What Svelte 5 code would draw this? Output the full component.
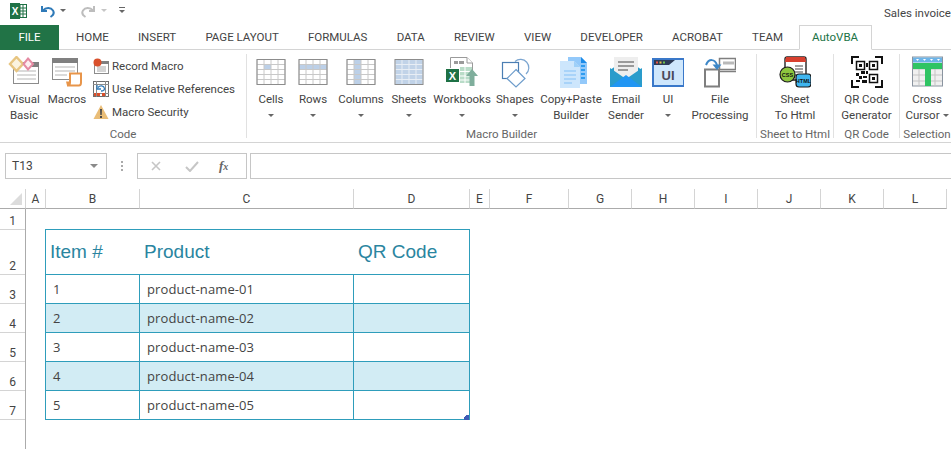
<script>
  const tabs = ['HOME','INSERT','PAGE LAYOUT','FORMULAS','DATA','REVIEW','VIEW','DEVELOPER','ACROBAT','TEAM'];
  const cols = ['A','B','C','D','E','F','G','H','I','J','K','L'];
  const rowsN = ['1','2','3','4','5','6','7'];
  const items = [1,2,3,4,5];
  const xs = [0.5,7.5,14.5,21.5,28.5];
  const ys = [0.5,5.5,10.5,15.5,20.5,25.5];
</script>

{#snippet grid(kind)}
  <svg class="ic" width="32" height="32" viewBox="0 0 32 32">
    <g transform="translate(1.5,3)">
      {#if kind === 'cell'}<rect x="7.5" y="5.5" width="7" height="5" fill="#bcd0e8"/>{/if}
      {#if kind === 'row'}<rect x="0.5" y="5.5" width="28" height="5" fill="#bcd0e8"/>{/if}
      {#if kind === 'col'}<rect x="7.5" y="0.5" width="7" height="25" fill="#bcd0e8"/>{/if}
      {#if kind === 'all'}<rect x="0.5" y="0.5" width="28" height="25" fill="#c1d3e8"/>{/if}
      {#each xs as x}<line x1={x} x2={x} y1="0.5" y2="25.5" stroke={kind === 'all' ? '#e8eef5' : '#c8c8c8'}/>{/each}
      {#each ys as y}<line x1="0.5" x2="28.5" y1={y} y2={y} stroke={kind === 'all' ? '#e8eef5' : '#c8c8c8'}/>{/each}
      <rect x="0.5" y="0.5" width="28" height="25" fill="none" stroke="#8c8c8c"/>
    </g>
  </svg>
{/snippet}

{#snippet caret()}<span class="caret"></span>{/snippet}

<div class="app">
  <div class="qat">
    <svg class="xl" width="17" height="16" viewBox="0 0 17 16">
      <rect x="6" y="1.5" width="10.5" height="13" fill="#fff" stroke="#1e7145"/>
      <path d="M10 2v12M13 2v12M7 5h9M7 8h9M7 11h9" stroke="#1e7145" stroke-width="1"/>
      <rect x="0" y="0" width="10" height="16" fill="#1e7145"/>
      <text x="5" y="12" text-anchor="middle" class="xl-t">X</text>
    </svg>
    <svg class="undo" width="16" height="16" viewBox="0 0 16 16">
      <path d="M2 3v5h5" fill="none" stroke="#2f7ab8" stroke-width="2"/>
      <path d="M3 7.5C6 4 11 4.5 13 7.500C14.500 10 13 12.500 10.500 14" fill="none" stroke="#2f7ab8" stroke-width="2"/>
    </svg>
    <span class="mini dark"></span>
    <svg class="redo" width="16" height="16" viewBox="0 0 16 16">
      <path d="M14 3v5H9" fill="none" stroke="#bdbdbd" stroke-width="2"/>
      <path d="M13 7.500C10 4 5 4.500 3 7.500C1.500 10 3 12.500 5.500 14" fill="none" stroke="#bdbdbd" stroke-width="2"/>
    </svg>
    <span class="mini light"></span>
    <span class="custom"><i></i><b></b></span>
    <span class="spacer"></span>
    <span class="title">Sales invoice</span>
  </div>

  <div class="tabs">
    <div class="file">FILE</div>
    {#each tabs as t}<div class="tab">{t}</div>{/each}
    <div class="active">AutoVBA</div>
  </div>

  <div class="ribbon">
    <section class="group code">
      <div class="btns">
        <div class="btn w42">
          <svg class="ic" width="32" height="32" viewBox="0 0 32 32">
            <rect x="5.500" y="6.500" width="25" height="21" fill="#fff" stroke="#8c8c8c"/>
            <rect x="23" y="6" width="8" height="5" fill="#808080"/>
            <path d="M9 15h19M9 19h19M9 23h19" stroke="#b5b5b5"/>
            <path d="M8.500 1 15 8 8.500 15 2 8Z" fill="#fbf3df" stroke="#e7c581" stroke-width="2.400"/>
            <path d="M20 2.500 25 8 20 13.500 15.500 8Z" fill="#fdeef1" stroke="#e58ba3" stroke-width="2"/>
          </svg>
          <span>Visual<br/>Basic</span>
        </div>
        <div class="btn w44">
          <svg class="ic" width="32" height="32" viewBox="0 0 32 32">
            <rect x="1.500" y="2.500" width="25" height="21" fill="#fff" stroke="#8c8c8c"/>
            <rect x="1" y="2" width="26" height="5" fill="#808080"/>
            <path d="M4 11h20M4 15h20M4 19h12" stroke="#b5b5b5"/>
            <path d="M19 17.500h11v9c0 2-1 3-2 3H16c2 0 3-1 3-3Z" fill="#fff" stroke="#e8954a" stroke-width="2"/>
            <path d="M15 25.500h4v4h-3z" fill="#e8954a"/>
          </svg>
          <span>Macros</span>
        </div>
        <div class="smalls">
          <div class="small">
            <svg width="16" height="16" viewBox="0 0 16 16">
              <rect x="1.500" y="3.500" width="14" height="12" fill="#fff" stroke="#8c8c8c"/>
              <rect x="8" y="3" width="8" height="3" fill="#808080"/>
              <path d="M4 9h9M4 11h9M4 13h9" stroke="#a8a8a8"/>
              <circle cx="4.500" cy="4.500" r="4" fill="#d9502c"/>
            </svg>
            <span>Record Macro</span>
          </div>
          <div class="small">
            <svg width="16" height="16" viewBox="0 0 16 16">
              <rect x="0.500" y="0.500" width="15" height="15" fill="#fff" stroke="#6e6e6e"/>
              <path d="M0 3.500h16M3.500 0v16M12.500 0v16M0 12.500h16" stroke="#8c8c8c"/>
              <rect x="4" y="12" width="3" height="3" fill="#d9502c"/><rect x="9" y="12" width="3" height="3" fill="#d9502c"/><rect x="1" y="12" width="2" height="3" fill="#d9502c"/>
              <path d="M5 6.500C7 4 11 4.500 11.500 7.500C11.500 9 10 10 8 10" fill="none" stroke="#2f7ab8" stroke-width="1.300"/>
              <path d="M4 4v4h4" fill="none" stroke="#2f7ab8" stroke-width="1.300"/>
            </svg>
            <span>Use Relative References</span>
          </div>
          <div class="small">
            <svg width="16" height="16" viewBox="0 0 16 16">
              <path d="M8 1 15.500 15H.5Z" fill="#e9bd77"/>
              <path d="M7 5h2l-.3 6H7.300Z" fill="#4a4a4a"/>
              <rect x="7" y="12" width="2" height="2" fill="#4a4a4a"/>
            </svg>
            <span>Macro Security</span>
          </div>
        </div>
      </div>
      <div class="glabel">Code</div>
    </section>

    <section class="group builder">
      <div class="btns">
        <div class="btn w42">{@render grid('cell')}<span>Cells</span>{@render caret()}</div>
        <div class="btn w42">{@render grid('row')}<span>Rows</span>{@render caret()}</div>
        <div class="btn w54">{@render grid('col')}<span>Columns</span>{@render caret()}</div>
        <div class="btn w42">{@render grid('all')}<span>Sheets</span>{@render caret()}</div>
        <div class="btn w64">
          <svg class="ic" width="32" height="32" viewBox="0 0 32 32">
            <path d="M4.500 12V1.500H21L26.500 7v10" fill="#fff" stroke="#9a9a9a"/>
            <path d="M21 1.500V7h5.500" fill="#fff" stroke="#9a9a9a"/>
            <rect x="8" y="5" width="4" height="3" fill="#9a9a9a"/><rect x="13" y="5" width="5" height="3" fill="#9a9a9a"/>
            <path d="M14 11h12v16H14Z" fill="#b9dcc8"/>
            <path d="M19 11v16M14 15.500h12M14 20h12M14 24h12" stroke="#fff"/>
            <rect x="0" y="13" width="13" height="13" fill="#1e7145"/>
            <text x="6.500" y="23.500" text-anchor="middle" class="xl-t big">X</text>
            <path d="M26 13 32 20H28.500V30H23.500V20H20Z" fill="#7fae9c"/>
          </svg>
          <span>Workbooks</span>{@render caret()}
        </div>
        <div class="btn w42">
          <svg class="ic" width="32" height="32" viewBox="0 0 32 32">
            <path d="M16 5.500A8 8 0 1 1 27 18" fill="none" stroke="#7ba5d0" stroke-width="1.200"/>
            <rect x="3.500" y="6.500" width="16" height="16" fill="none" stroke="#4b7eb3" stroke-width="1.200"/>
            <path d="M17 13.500 26 22.500 17 31 8 22.500Z" fill="#fff" stroke="#6d9ccb" stroke-width="1.200"/>
          </svg>
          <span>Shapes</span>{@render caret()}
        </div>
        <div class="btn w70">
          <svg class="ic" width="32" height="32" viewBox="0 0 32 32">
            <path d="M13 1h13l6 6v21H13Z" fill="#93c9fa"/>
            <path d="M26 1l6 6h-6Z" fill="#1c8be8"/>
            <path d="M26 9h4v2h-4zM26 13h4v2h-4zM26 17h4v2h-4zM26 21h4v2h-4z" fill="#2f9cf0"/>
            <path d="M5 5h14l6 6v21H5Z" fill="#cde6fc"/>
            <path d="M19 5l6 6h-6Z" fill="#9fd0f8"/>
            <path d="M9 15h12M9 19h12M9 23h12M9 27h8" stroke="#84bff5" stroke-width="1.200"/>
          </svg>
          <span>Copy+Paste<br/>Builder</span>
        </div>
        <div class="btn w40">
          <svg class="ic" width="32" height="32" viewBox="0 0 32 32">
            <path d="M0 14 16 3 32 14V31H0Z" fill="#2a9ccb"/>
            <rect x="4" y="1" width="24" height="21" fill="#eeeeee"/>
            <path d="M8 6h16M8 10h16M8 14h10" stroke="#9a9a9a" stroke-width="1.800"/>
            <path d="M0 12 16 23 32 12V31H0Z" fill="#2a9ccb"/>
            <path d="M0 31 16 19 32 31Z" fill="#2196f3"/>
          </svg>
          <span>Email<br/>Sender</span>
        </div>
        <div class="btn w44">
          <svg class="ic" width="32" height="32" viewBox="0 0 32 32">
            <rect x="1" y="3" width="31" height="27" fill="#cfe7fc" stroke="#3a78c9" stroke-width="2"/>
            <path d="M2 4h21L17 9H2Z" fill="#2c3a55"/>
            <rect x="4" y="5.500" width="2" height="2" fill="#e6574a"/><rect x="7.500" y="5.500" width="2" height="2" fill="#e8c244"/><rect x="11" y="5.500" width="2" height="2" fill="#6cc14e"/>
            <text x="16" y="24" text-anchor="middle" class="ui-t">UI</text>
          </svg>
          <span>UI</span>{@render caret()}
        </div>
        <div class="btn w60">
          <svg class="ic" width="32" height="32" viewBox="0 0 32 32">
            <path d="M1 13.500h14v17H1Z" fill="#fff" stroke="#7f7f7f" stroke-width="2"/>
            <rect x="15.500" y="2.500" width="16" height="11" fill="#fff" stroke="#7f7f7f" stroke-width="1.500"/>
            <path d="M19 5.500h11v3H19z" fill="#b9b9b9"/>
            <path d="M16 15.500h16" stroke="#7f7f7f" stroke-width="1.500"/>
            <path d="M2 9C5 2 11 3 13 9" fill="none" stroke="#3d87c7" stroke-width="2"/>
            <path d="M8.500 8.500h9L13 14Z" fill="#3d87c7"/>
          </svg>
          <span>File<br/>Processing</span>
        </div>
      </div>
      <div class="glabel">Macro Builder</div>
    </section>

    <section class="group sheet">
      <div class="btns">
        <div class="btn full">
          <svg class="ic" width="32" height="32" viewBox="0 0 32 32">
            <rect x="6" y="1" width="21" height="23" rx="2" fill="#fff" stroke="#222" stroke-width="1.400"/>
            <path d="M7 1h19l1 5H6Z" fill="#d8402f"/>
            <path d="M16 10h8M16 13h8M16 16h8M16 19h8" stroke="#444"/>
            <circle cx="8.500" cy="18.500" r="7.500" fill="#8dc63f" stroke="#1b1b1b" stroke-width="1.200"/>
            <text x="8.500" y="20.500" text-anchor="middle" class="tiny">CSS</text>
            <rect x="17" y="18" width="15" height="13" rx="3" fill="#3fb5ef" stroke="#1b1b1b" stroke-width="1.200"/>
            <text x="24.500" y="27" text-anchor="middle" class="tiny">HTML</text>
          </svg>
          <span>Sheet<br/>To Html</span>
        </div>
      </div>
      <div class="glabel">Sheet to Html</div>
    </section>

    <section class="group qr">
      <div class="btns">
        <div class="btn full">
          <svg class="ic" width="32" height="32" viewBox="0 0 32 32" fill="none" stroke="#111">
            <path d="M1 8V1H8M24 1h7V8M1 24v7H8M24 31h7V24" stroke-width="2"/>
            <rect x="5.500" y="5.500" width="8" height="8" stroke-width="1.500"/>
            <rect x="18.500" y="5.500" width="8" height="8" stroke-width="1.500"/>
            <rect x="18.500" y="18.500" width="8" height="8" stroke-width="1.500"/>
            <g fill="#111" stroke="none">
              <rect x="8" y="8" width="3" height="3"/><rect x="21" y="8" width="3" height="3"/><rect x="21" y="21" width="3" height="3"/>
              <rect x="5" y="17" width="3" height="3"/><rect x="10" y="15" width="4" height="3"/><rect x="8" y="20" width="3" height="3"/>
              <rect x="12" y="20" width="4" height="2"/><rect x="5" y="24" width="4" height="2"/><rect x="11" y="24" width="5" height="3"/>
              <rect x="15" y="15" width="2" height="3"/><rect x="15" y="7" width="2" height="4"/>
            </g>
          </svg>
          <span>QR Code<br/>Generator</span>
        </div>
      </div>
      <div class="glabel">QR Code</div>
    </section>

    <section class="group sel">
      <div class="btns">
        <div class="btn full">
          <svg class="ic" width="32" height="32" viewBox="0 0 32 32">
            <rect x="1.500" y="1" width="30" height="29" fill="#f0f0f0" stroke="#8a94a0"/>
            <rect x="2" y="1.500" width="29" height="5" fill="#6cb4e8"/>
            <path d="M5 3h3l-1.500 2ZM12 3h3l-1.500 2ZM19 3h3l-1.500 2ZM26 3h3l-1.500 2Z" fill="#fff"/>
            <path d="M2 13h29M2 19h29M2 25h29M8 7v23M16 7v23M24 7v23" stroke="#c4c4c4"/>
            <path d="M2 7h29v6H20v17h-6V13H2Z" fill="#2fc463"/>
          </svg>
          <span>Cross<br/>Cursor<i class="inline-caret"></i></span>
        </div>
      </div>
      <div class="glabel">Selection</div>
    </section>
  </div>

  <div class="fbar">
    <div class="namebox"><span>T13</span><i></i></div>
    <div class="dots"></div>
    <div class="fxbox">
      <svg width="12" height="12" viewBox="0 0 12 12"><path d="M2 2l8 8M10 2l-8 8" stroke="#c6c6c6" stroke-width="1.600"/></svg>
      <svg width="14" height="12" viewBox="0 0 14 12"><path d="M1 7l4 4 8-9" fill="none" stroke="#c6c6c6" stroke-width="2"/></svg>
      <span class="fx">f<small>x</small></span>
    </div>
    <div class="finput"></div>
  </div>

  <div class="sheetgrid">
    <div class="corner"><i></i></div>
    {#each cols as c}<div class="colh">{c}</div>{/each}
    <div class="rowhs">
      {#each rowsN as r}<div class="rowh">{r}</div>{/each}
    </div>
    <div class="tbl">
      <div class="th first">Item #</div>
      <div class="th">Product</div>
      <div class="th">QR Code</div>
      {#each items as n}
        <div class="td first" class:alt={n % 2 === 0}>{n}</div>
        <div class="td" class:alt={n % 2 === 0}>product-name-0{n}</div>
        <div class="td last" class:alt={n % 2 === 0}></div>
      {/each}
      <i class="handle"></i>
    </div>
  </div>
</div>

<style>
  :global(body) { margin: 0; background: #fff; }
  .app {
    width: 951px; height: 449px; overflow: hidden; background: #fff;
    display: flex; flex-direction: column;
    font-family: Roboto, "Open Sans", sans-serif; font-size: 12px; color: #444;
  }
  .qat { height: 25px; display: flex; align-items: flex-start; flex: none; }
  .xl { margin: 3px 0 0 10px; }
  .xl-t { font: bold 10px "Liberation Sans", sans-serif; fill: #fff; }
  .xl-t.big { font-size: 11px; }
  .undo { margin: 3px 0 0 13px; }
  .redo { margin: 3px 0 0 14px; }
  .mini { width: 0; height: 0; margin: 9px 0 0 4px; border: 3px solid transparent; border-top-color: #666; border-bottom: 0; }
  .mini.light { border-top-color: #c6c6c6; margin-left: 5px; }
  .custom { margin: 7px 0 0 12px; width: 6px; display: flex; flex-direction: column; gap: 2px; align-items: center; }
  .custom i { width: 6px; height: 1px; background: #666; }
  .custom b { width: 0; height: 0; border: 3px solid transparent; border-top-color: #666; border-bottom: 0; }
  .spacer { flex: 1; }
  .title { width: 67px; flex: none; white-space: nowrap; margin-top: 5px; line-height: 16px; color: #444; font-size: 11.500px; }

  .tabs { height: 25px; flex: none; display: flex; border-bottom: 1px solid #d4d4d4; box-sizing: border-box; line-height: 25px; color: #444; font-size: 11.500px; }
  .file { width: 59px; margin-right: 2.500px; background: #217346; color: #fff; text-align: center; flex: none; height: 25px; }
  .tab { padding: 0 14.600px; white-space: nowrap; flex: none; }
  .active {
    color: #217346; border: 1px solid #d4d4d4; border-bottom: 1px solid #fff; height: 25px; box-sizing: border-box;
    padding: 0 12.500px; margin-left: 1px; line-height: 23px; flex: none;
  }

  .ribbon { height: 93px; flex: none; display: flex; align-items: flex-start; border-bottom: 1px solid #d4d4d4; box-sizing: border-box; font-size: 11.500px; }
  .group { height: 84px; margin-top: 4px; flex: none; display: flex; flex-direction: column; position: relative; border-right: 1px solid #e1e1e1; box-sizing: border-box; }
  .code { width: 247px; padding-left: 3px; }
  .builder { width: 510px; padding-left: 3px; }
  .sheet { width: 77px; }
  .qr { width: 66px; }
  .sel { width: 54px; border-right: 0; flex: none; }
  .btns { display: flex; height: 72px; flex: none; }
  .btn { display: flex; flex-direction: column; align-items: center; padding-top: 2px; line-height: 16px; text-align: center; white-space: nowrap; flex: none; box-sizing: border-box; }
  .ic { display: block; margin-bottom: 3px; flex: none; }
  .w40 { width: 40px; } .w42 { width: 42px; } .w44 { width: 44px; } .w54 { width: 54px; } .w60 { width: 60px; } .w64 { width: 64px; } .w70 { width: 70px; }
  .full { width: 100%; }
  .caret { width: 0; height: 0; margin-top: 7px; border: 3px solid transparent; border-top-color: #666; border-bottom: 0; }
  .inline-caret { display: inline-block; width: 0; height: 0; margin: 0 0 2px 3px; border: 3px solid transparent; border-top-color: #666; border-bottom: 0; }
  .smalls { display: flex; flex-direction: column; margin-left: 4px; }
  .small { height: 23px; display: flex; align-items: center; gap: 3px; white-space: nowrap; }
  .small svg { flex: none; }
  .glabel { text-align: center; color: #666; line-height: 16px; white-space: nowrap; margin-top: 0; }
  .code .glabel, .builder .glabel { margin-left: -3px; }
  .tiny { font: bold 5.500px "Liberation Sans", sans-serif; fill: #111; }
  .ui-t { font: bold 13px "Liberation Sans", sans-serif; fill: #4a4a5a; }

  .fbar { margin-top: 10px; height: 26px; flex: none; display: flex; align-items: stretch; }
  .namebox { width: 102px; margin-left: 5px; box-sizing: border-box; border: 1px solid #c6c6c6; display: flex; align-items: center; justify-content: space-between; padding: 0 8px 0 6px; flex: none; color: #444; }
  .namebox i { width: 0; height: 0; border: 4px solid transparent; border-top-color: #8a8a8a; border-bottom: 0; }
  .dots { width: 2px; height: 10px; margin: 8px 14px 0 14px; background: repeating-linear-gradient(#aaa 0 2px, transparent 2px 4px); flex: none; }
  .fxbox { width: 110px; box-sizing: border-box; border: 1px solid #c6c6c6; display: flex; align-items: center; padding-left: 12px; flex: none; }
  .fxbox svg:nth-child(2) { margin-left: 23px; }
  .fx { margin-left: 20px; font: italic bold 13px "Liberation Serif", serif; color: #666; }
  .fx small { font-size: 10px; }
  .finput { flex: 1; margin-left: 3px; border: 1px solid #c6c6c6; border-right: 0; }

  .sheetgrid {
    margin-top: 10px; flex: 1; display: grid;
    grid-template-columns: 26px 20px 94px 214px 116px 20px 79px 63px 63px 63px 63px 63px 63px;
    grid-template-rows: 20px 1fr;
    min-height: 0;
  }
  .corner { border-right: 1px solid #d4d4d4; border-bottom: 1px solid #ababab; box-sizing: border-box; position: relative; }
  .corner i { position: absolute; right: 3px; bottom: 3px; width: 0; height: 0; border-left: 12px solid transparent; border-bottom: 12px solid #dcdcdc; }
  .colh { box-sizing: border-box; border-right: 1px solid #d4d4d4; border-bottom: 1px solid #ababab; text-align: center; line-height: 21px; color: #444; }
  .rowhs {
    grid-row: 2; grid-column: 1; border-right: 1px solid #ababab; box-sizing: border-box;
    display: grid; grid-template-rows: 21px 45px 29px 29px 29px 29px 29px; align-content: start;
  }
  .rowh { box-sizing: border-box; border-bottom: 1px solid #d4d4d4; text-align: center; display: flex; align-items: flex-end; justify-content: center; line-height: 16px; color: #444; }
  .tbl {
    grid-row: 2; grid-column: 3 / 6; align-self: start; margin-top: 20px; margin-left: -1px; position: relative;
    display: grid; grid-template-columns: 94px 214px 115px; grid-template-rows: 45px repeat(5, 29px);
    border: solid #2e9dbb; border-width: 1px 1px 0 1px; box-sizing: border-box; width: 425px;
  }
  .th { font: 19px/44px "Liberation Sans", sans-serif; color: #2a85a0; border-bottom: 1px solid #2e9dbb; padding-left: 4px; }
  .td { box-sizing: border-box; border-bottom: 1px solid #2e9dbb; border-right: 1px solid #2e9dbb; padding-left: 7px; font: 13px/28px "Open Sans", sans-serif; letter-spacing: 0.1px; color: #444; }
  .td.last { border-right: 0; }
  .alt { background: #d2ecf4; }
  .handle { position: absolute; right: 0; bottom: 0; width: 5px; height: 5px; background: linear-gradient(135deg, transparent 30%, #3f5bb5 30%); }
</style>
